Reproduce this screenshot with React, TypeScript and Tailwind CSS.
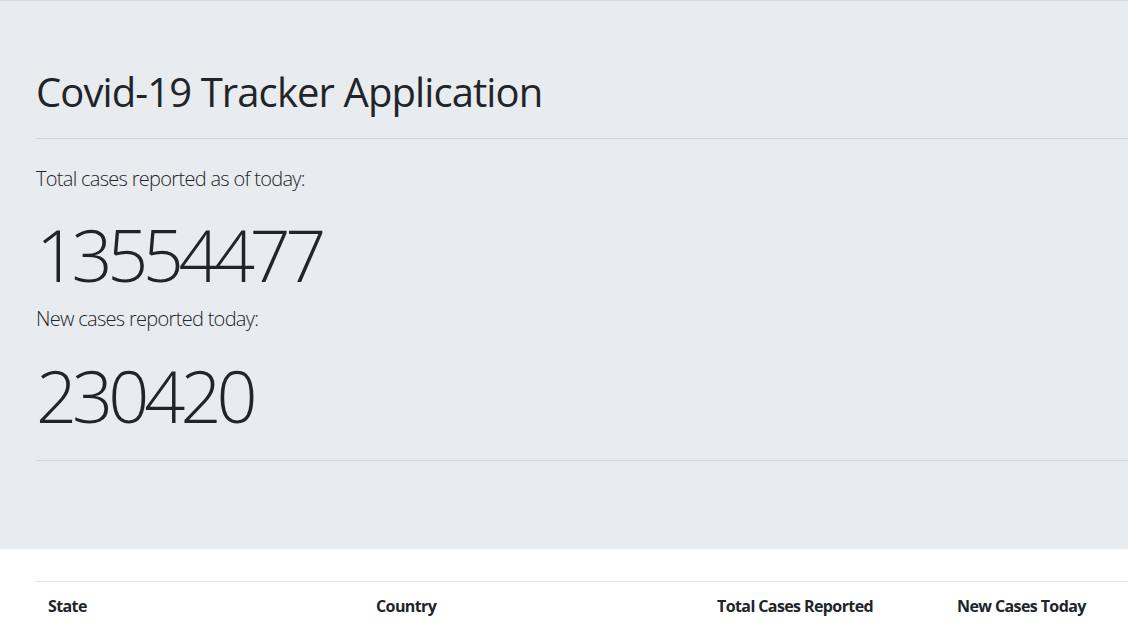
const headers = ["State", "Country", "Total Cases Reported", "New Cases Today"];

export default function App() {
    return (
        <div className="min-h-screen bg-white text-[#212529] font-['Open_Sans',sans-serif]">
            <div className="h-px bg-[#d6d9dc]" />
            <div className="bg-[#e9ecef] pl-9 pt-[67px] pb-[88px]">
                <h1 className="text-[40px] leading-[48px] font-normal tracking-[-0.9px]">Covid-19 Tracker Application</h1>
                <hr className="mt-[22px] border-0 border-t border-black/10" />
                <p className="mt-[25px] text-[20px] leading-[30px] font-light tracking-[-0.7px]">Total cases reported as of today:</p>
                <div className="mt-[17px] text-[72px] leading-[86px] font-light tracking-[-5.5px]">13554477</div>
                <p className="mt-[7px] text-[20px] leading-[30px] font-light tracking-[-0.7px]">New cases reported today:</p>
                <div className="mt-[18px] text-[72px] leading-[86px] font-light tracking-[-5px]">230420</div>
                <hr className="mt-[22px] border-0 border-t border-black/10" />
            </div>
            <div className="mt-8 ml-9">
                <div className="grid grid-cols-[328px_341px_240px_1fr] border-t border-[#dee2e6]">
                    {headers.map((h) => (
                        <div key={h} className="px-3 py-3 text-base leading-6 font-bold tracking-[-0.6px]">
                            {h}
                        </div>
                    ))}
                </div>
            </div>
        </div>
    );
}
